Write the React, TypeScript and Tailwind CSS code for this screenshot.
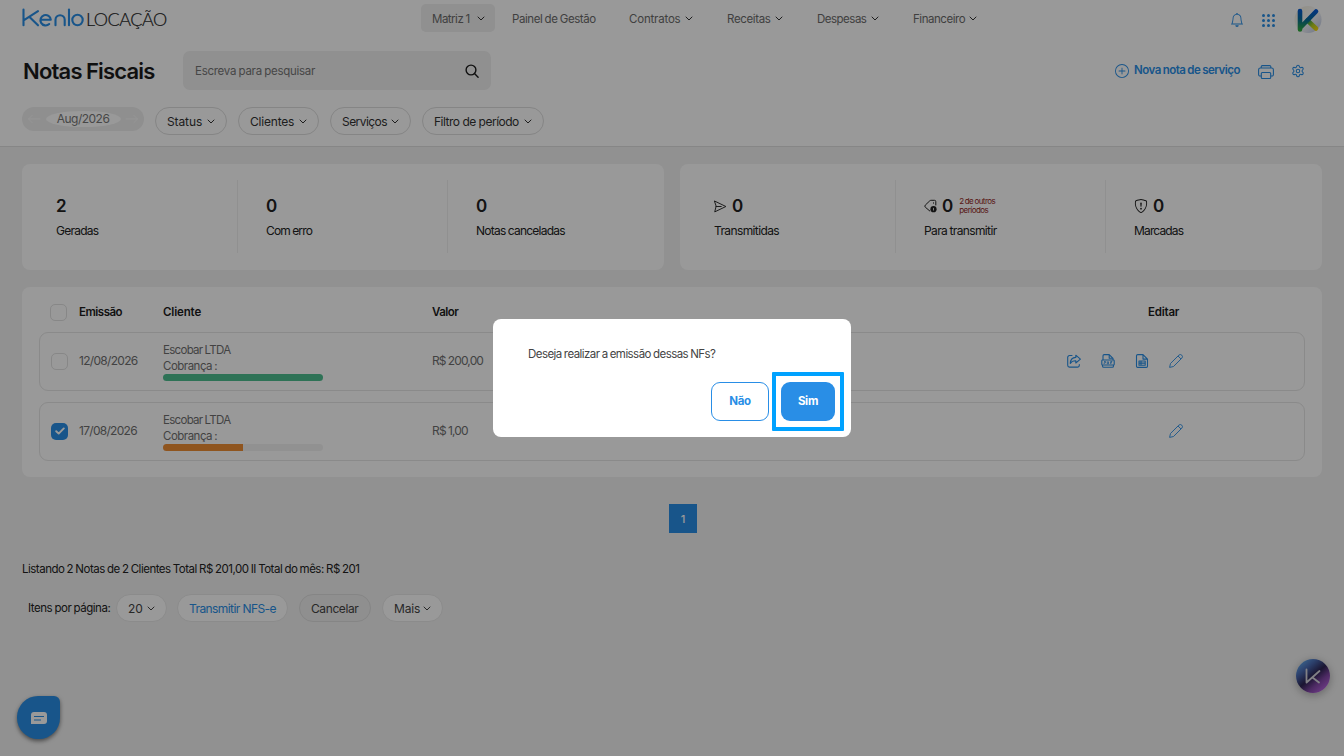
import React from "react";
import { BsBell, BsShieldExclamation, BsPlusCircle } from "react-icons/bs";
import { Settings } from "lucide-react";

function Chevron({ className = "" }: { className?: string }) {
  return (
    <svg viewBox="0 0 8 5" className={`h-[5px] w-[8px] shrink-0 ${className}`} fill="none" stroke="currentColor" strokeWidth="1" strokeLinecap="round" strokeLinejoin="round">
      <path d="M1 1l3 3 3-3" />
    </svg>
  );
}

function Logo() {
  return (
    <div className="flex h-[22px] w-[160px] items-start">
      <svg viewBox="0 0 62 20" className="h-[20px] w-[62px] shrink-0" fill="none" stroke="#298ee6" strokeWidth="2.1" strokeLinecap="round" strokeLinejoin="round">
        <path d="M1.500 1.500v15.800M16 3.200L2 12.200M7.500 9L16 17.300" />
        <path d="M18.500 11.800H28.800A5.200 5.200 0 1 0 27.200 16" />
        <path d="M33.500 17.300V11.800a4.600 4.600 0 0 1 9.200 0v5.500" />
        <path d="M47 1.500v15.800" />
        <circle cx="55.500" cy="12" r="5.200" />
      </svg>
      <span className="ml-[2px] mt-[1px] whitespace-nowrap font-[Lato] text-[18px] font-light leading-[20px] tracking-[-0.5px] text-[#222] [-webkit-text-stroke:0.2px_#333]">LOCAÇÃO</span>
    </div>
  );
}

function NavItem({ label, width, track, chevron = true }: { label: string; width: string; track: string; chevron?: boolean }) {
  return (
    <div className={`flex shrink-0 items-center ${width}`}>
      <span className={`whitespace-nowrap pt-px leading-[18px] ${track}`}>{label}</span>
      {chevron && <Chevron className="ml-auto text-[#333]" />}
    </div>
  );
}

function Pill({ label, className, track, chevron = true }: { label: string; className: string; track: string; chevron?: boolean }) {
  return (
    <button className={`flex h-7 shrink-0 items-center justify-between rounded-full border px-[11px] pt-px text-[12px] ${className}`}>
      <span className={`whitespace-nowrap ${track}`}>{label}</span>
      {chevron && <Chevron />}
    </button>
  );
}

function Stat({ value, label, track, icon, note, last }: { value: string; label: string; track: string; icon?: React.ReactNode; note?: React.ReactNode; last?: boolean }) {
  return (
    <div className={`flex h-[73px] shrink-0 flex-col pt-[16px] ${last ? "w-[182px]" : "mr-[28px] w-[182px] border-r border-[#f0f0f0]"}`}>
      <div className="flex h-5 items-center text-[#222]">
        {icon}
        <span className="text-[17px] font-semibold leading-5">{value}</span>
        {note}
      </div>
      <div className={`mt-[7px] text-[12px] leading-4 text-[#222] ${track}`}>{label}</div>
    </div>
  );
}

function SendIcon() {
  return (
    <svg viewBox="0 0 14 14" className="mr-[5px] size-[13px]" fill="none" stroke="currentColor" strokeWidth="1" strokeLinejoin="round" strokeLinecap="round">
      <path d="M.8 1.200L12.800 7 .8 12.800l1.400-5.800zM2.200 7h5.600" />
    </svg>
  );
}

function TagIcon() {
  return (
    <svg viewBox="0 0 14 14" className="mr-[4px] size-[14px]" fill="none" stroke="currentColor" strokeWidth="1" strokeLinejoin="round" strokeLinecap="round">
      <path d="M5.800 12L1.300 8.200a1.500 1.500 0 0 1 0-2.100L5.800 1.800a2 2 0 0 1 1.300-.5h3.400A1.300 1.300 0 0 1 11.800 2.600V6" />
      <path d="M9.500 3.800v.4" />
      <circle cx="9.500" cy="10.200" r="3.100" fill="currentColor" stroke="none" />
      <path d="M9.500 9.300v1.800" stroke="#fff" strokeWidth=".8" />
    </svg>
  );
}

function ShareIcon() {
  return (
    <svg viewBox="0 0 14 14" className="size-[14px]" fill="none" stroke="currentColor" strokeWidth="1.1" strokeLinejoin="round" strokeLinecap="round">
      <path d="M5 1.500H2.500A1.800 1.800 0 0 0 .7 3.300v8a1.800 1.800 0 0 0 1.800 1.800h8a1.800 1.800 0 0 0 1.800-1.800V10.500" />
      <path d="M8.800 1.200l4.600 3.900-4.600 3.900V6.800C6 6.700 4.500 7.600 3.300 9.500 3.400 6 5.500 3.600 8.800 3.400z" />
    </svg>
  );
}

function PdfIcon() {
  return (
    <svg viewBox="0 0 14 14" className="size-[14px]" fill="none" stroke="currentColor" strokeWidth="1.1" strokeLinejoin="round">
      <path d="M2 6V1.800A1.200 1.200 0 0 1 3.200.6h5L12 4.300V6M8.200.6v3.700H12" />
      <rect x=".8" y="6" width="12.400" height="5" rx=".8" />
      <path d="M3 7.500h1.500v1.200H3.200V10M6.300 7.300v2.500h1.200V7.500M9.700 10V7.500h1.600M9.700 8.700h1.300" strokeWidth=".8" />
      <path d="M1.500 11v1a1.300 1.300 0 0 0 1.300 1.300h8.400a1.300 1.300 0 0 0 1.300-1.300v-1" />
    </svg>
  );
}

function SheetIcon() {
  return (
    <svg viewBox="0 0 14 14" className="size-[14px]" fill="none" stroke="currentColor" strokeWidth="1.1" strokeLinejoin="round">
      <path d="M8 .6H2.700A1.200 1.200 0 0 0 1.500 1.800v10.400a1.200 1.200 0 0 0 1.200 1.200h8.600a1.200 1.200 0 0 0 1.200-1.200V5.100zM8 .6v4.500h4.500" />
      <path d="M4 7h6.200v4.200H4zM4 9.100h6.200M6 7v4.200" />
    </svg>
  );
}

function PencilIcon() {
  return (
    <svg viewBox="0 0 14 14" className="size-[14px]" fill="none" stroke="currentColor" strokeWidth=".9" strokeLinejoin="round">
      <path d="M.6 13.400l.9-3.900L9.800 1.200a1.900 1.900 0 0 1 3 3L4.500 12.500zM9 2l3 3" />
    </svg>
  );
}

function PrinterIcon() {
  return (
    <svg viewBox="0 0 16 14" className="h-[14px] w-[16px]" fill="none" stroke="currentColor" strokeWidth="1.1" strokeLinejoin="round">
      <path d="M3.200 3V1.800A1.200 1.200 0 0 1 4.400.6h7.200a1.200 1.200 0 0 1 1.200 1.200V3" />
      <path d="M3.300 11H2A1.400 1.400 0 0 1 .6 9.600V4.800A1.800 1.800 0 0 1 2.400 3h11.200a1.800 1.800 0 0 1 1.800 1.800v4.800A1.400 1.400 0 0 1 14 11h-1.300" />
      <rect x="3.300" y="7.500" width="9.400" height="6" rx="1" />
    </svg>
  );
}

function Avatar() {
  return (
    <svg viewBox="0 0 28 28" className="size-7">
      <defs>
        <linearGradient id="av" gradientUnits="userSpaceOnUse" x1="14" y1="4" x2="12" y2="25">
          <stop offset="0" stopColor="#0759d4" />
          <stop offset=".45" stopColor="#066a9a" />
          <stop offset="1" stopColor="#2faa3c" />
        </linearGradient>
        <linearGradient id="leg" gradientUnits="userSpaceOnUse" x1="14" y1="14" x2="24" y2="24">
          <stop offset="0" stopColor="#1d9a5a" />
          <stop offset=".5" stopColor="#b8cf20" />
          <stop offset="1" stopColor="#ffd90a" />
        </linearGradient>
        <linearGradient id="avb" x1="0" y1="0" x2="1" y2="1">
          <stop offset="0" stopColor="#f4edda" />
          <stop offset=".5" stopColor="#f8f8f8" />
          <stop offset="1" stopColor="#b7c4e2" />
        </linearGradient>
      </defs>
      <circle cx="14" cy="13.500" r="13.500" fill="url(#avb)" />
      <g fill="none" strokeWidth="4.600" strokeLinecap="round">
        <path d="M13.500 14.500l8.500 8" stroke="url(#leg)" />
        <path d="M6 5v18.500M22 5.500L6.500 21.500" stroke="url(#av)" />
      </g>
    </svg>
  );
}

function Check({ checked }: { checked?: boolean }) {
  return checked ? (
    <span className="flex size-[17px] items-center justify-center rounded-[5px] bg-[#298ee6]">
      <svg viewBox="0 0 10 8" className="h-2 w-2.5" fill="none" stroke="#fff" strokeWidth="1.900" strokeLinecap="round" strokeLinejoin="round">
        <path d="M1.200 4.200l2.500 2.400L8.800 1.400" />
      </svg>
    </span>
  ) : (
    <span className="block size-[17px] rounded-[5px] border border-[#e2e2e2]" />
  );
}

function Row({ date, value, valueTrack, bar, actions, checked }: { date: string; value: string; valueTrack: string; bar: React.ReactNode; actions?: boolean; checked?: boolean }) {
  return (
    <div className="flex h-[59px] items-center rounded-[9px] border border-[#e6e6e6] pb-px text-[12px] text-[#6f6f6f]">
      <div className="ml-[11px] w-[28px]"><Check checked={checked} /></div>
      <div className="w-[84px] tracking-[-0.7px]">{date}</div>
      <div className="w-[269px] pt-px">
        <div className="text-[11.5px] leading-4 tracking-[-0.7px]">Escobar LTDA</div>
        <div className="text-[11.5px] leading-4 tracking-[-0.5px]">Cobrança :</div>
        <div className="flex h-[7px] w-[160px] overflow-hidden rounded-full bg-[#f2f2f2]">{bar}</div>
      </div>
      <div className={`w-[400px] ${valueTrack}`}>{value}</div>
      <div className="ml-auto mr-[121px] flex items-center text-[#298ee6]">
        {actions && (
          <div className="mr-[20px] flex gap-[20px]">
            <ShareIcon />
            <PdfIcon />
            <SheetIcon />
          </div>
        )}
        <PencilIcon />
      </div>
    </div>
  );
}

export default function App() {
  return (
    <div className="relative h-[756px] w-[1344px] overflow-hidden bg-[#f2f2f2] font-[Inter,sans-serif] text-[#222] [word-spacing:-0.5px]">
      <header className="h-[147px] border-b border-[#dfdfdf] bg-white px-[22px]">
        <div className="flex h-[38px] items-start">
          <div className="pt-[8px]"><Logo /></div>
          <nav className="ml-[239px] flex h-[34px] items-center text-[11.5px] text-[#6b6b6b]">
            <div className="mt-[2px] flex h-[28px] w-[74px] items-center rounded-[5px] bg-[#f0f0f0] pl-[11px] pr-[10px]">
              <NavItem label="Matriz 1" width="w-full" track="tracking-[-0.5px]" />
            </div>
            <div className="ml-[17px] mt-[2px] flex gap-[34px]">
              <NavItem label="Painel de Gestão" width="w-[83px]" track="tracking-[-0.43px]" chevron={false} />
              <NavItem label="Contratos" width="w-[64px]" track="tracking-[-0.2px]" />
              <NavItem label="Receitas" width="w-[56px]" track="tracking-[-0.35px]" />
              <NavItem label="Despesas" width="w-[62px]" track="tracking-[-0.5px]" />
              <NavItem label="Financeiro" width="w-[64px]" track="tracking-[-0.45px]" />
            </div>
          </nav>
          <div className="ml-auto flex h-[40px] items-center text-[#298ee6]">
            <BsBell className="mr-[18px] size-[14px]" />
            <svg viewBox="0 0 13 13" className="mr-[19px] size-[13px]" fill="currentColor">
              {[1.5, 6.5, 11.5].map((y) => [1.5, 6.5, 11.5].map((x) => <circle key={`${x}-${y}`} cx={x} cy={y} r="1.500" />))}
            </svg>
            <Avatar />
          </div>
        </div>
        <div className="mt-[13px] flex h-[39px] items-center">
          <h1 className="w-[161px] whitespace-nowrap pl-px pt-px text-[22px] font-semibold tracking-[-0.8px] text-[#1c1c1c]">Notas Fiscais</h1>
          <div className="flex h-[39px] w-[308px] items-center justify-between rounded-[7px] bg-[#f0f0f0] px-[12px] text-[11.5px] text-[#757575]">
            <span className="pt-[2px] tracking-[-0.28px]">Escreva para pesquisar</span>
            <svg viewBox="0 0 14 14" className="size-[14px]" fill="none" stroke="#1c1c1c" strokeWidth="1.400" strokeLinecap="round">
              <circle cx="6" cy="6" r="4.900" />
              <path d="M9.500 9.500l3.600 3.700" />
            </svg>
          </div>
          <div className="ml-auto flex items-center text-[#298ee6]">
            <BsPlusCircle className="mr-[5px] size-[14px]" />
            <span className="w-[124px] whitespace-nowrap pt-px text-[11.5px] font-semibold tracking-[-0.5px]">Nova nota de serviço</span>
            <span className="mt-[3px]"><PrinterIcon /></span>
            <Settings className="ml-[17px] mr-[17px] size-[14px]" strokeWidth={1.8} />
          </div>
        </div>
        <div className="mt-[17px] flex items-start">
          <div className="flex h-6 w-[122px] items-center justify-between rounded-full bg-[#efefef] px-[5px] text-[12px] text-[#777]">
            <svg viewBox="0 0 14 10" className="h-[10px] w-[14px]" fill="none" stroke="#fafafa" strokeLinecap="round" strokeLinejoin="round"><path d="M13 5H1.500M5 1.500L1.500 5 5 8.500" /></svg>
            <span className="flex h-4 w-[75px] items-center justify-center rounded-[50%] bg-white tracking-[-0.5px]">Aug/2026</span>
            <svg viewBox="0 0 14 10" className="h-[10px] w-[14px]" fill="none" stroke="#fafafa" strokeLinecap="round" strokeLinejoin="round"><path d="M1 5h11.500M9 1.500L12.500 5 9 8.500" /></svg>
          </div>
          <div className="ml-[11px] flex gap-[11px] text-[#333]">
            <Pill label="Status" className="w-[72px] border-[#dedede]" track="tracking-[-0.1px]" />
            <Pill label="Clientes" className="w-[81px] border-[#dedede]" track="tracking-[-0.2px]" />
            <Pill label="Serviços" className="w-[81px] border-[#dedede]" track="tracking-[-0.55px]" />
            <Pill label="Filtro de período" className="w-[122px] border-[#dedede]" track="tracking-[-0.5px]" />
          </div>
        </div>
      </header>

      <main className="px-[22px] pt-[17px]">
        <div className="flex gap-4">
          <section className="flex h-[106px] w-[642px] rounded-[8px] bg-white pl-[34px] pt-[16px]">
            <Stat value="2" label="Geradas" track="tracking-[-0.75px]" />
            <Stat value="0" label="Com erro" track="tracking-[-0.8px]" />
            <Stat value="0" label="Notas canceladas" track="tracking-[-0.75px]" last />
          </section>
          <section className="flex h-[106px] w-[642px] rounded-[8px] bg-white pl-[34px] pt-[16px]">
            <Stat value="0" label="Transmitidas" track="tracking-[-0.62px]" icon={<SendIcon />} />
            <Stat
              value="0"
              label="Para transmitir"
              track="tracking-[-0.62px]"
              icon={<TagIcon />}
              note={<span className="ml-[6px] text-[8px] leading-[9px] tracking-[-0.55px] text-[#93291e]">2 de outros<br />períodos</span>}
            />
            <Stat value="0" label="Marcadas" track="tracking-[-0.85px]" last icon={<BsShieldExclamation className="mr-[5px] size-[14px]" />} />
          </section>
        </div>

        <section className="mt-[17px] h-[190px] rounded-[8px] bg-white px-[17px]">
          <div className="flex h-[45px] items-center pt-[5px] text-[11.5px] font-semibold text-[#1c1c1c]">
            <div className="ml-[11px] w-[29px]"><Check /></div>
            <div className="w-[84px] pt-[2px] tracking-[-0.5px]">Emissão</div>
            <div className="w-[269px] pt-[2px] tracking-[-0.15px]">Cliente</div>
            <div className="pt-[2px] tracking-[-0.5px]">Valor</div>
            <div className="ml-auto w-[157px] pt-[2px] tracking-[-0.2px]">Editar</div>
          </div>
          <Row date="12/08/2026" value="R$ 200,00" valueTrack="tracking-[-0.85px]" bar={<div className="w-full bg-[#4ebe8f]" />} actions />
          <div className="h-[11px]" />
          <Row date="17/08/2026" value="R$ 1,00" valueTrack="tracking-[-0.8px]" bar={<div className="w-1/2 bg-[#ee8e35]" />} checked />
        </section>

        <div className="mt-[27px] flex justify-center pl-[22px]">
          <div className="flex h-[29px] w-[28px] items-center justify-center bg-[#298ee6] pt-px text-[11px] font-medium text-white">1</div>
        </div>

        <p className="mt-[28px] whitespace-nowrap text-[11.5px] leading-4 tracking-[-0.5px]">Listando 2 Notas de 2 Clientes Total R$ 201,00 II Total do mês: R$ 201</p>
        <div className="mt-[17px] flex items-center pl-[6px] text-[#444]">
          <span className="w-[88px] whitespace-nowrap text-[11.5px] leading-[18px] tracking-[-0.47px] text-[#222]">Itens por página:</span>
          <Pill label="20" className="w-[51px] border-[#e8e8e8] bg-white" track="" />
          <Pill label="Transmitir NFS-e" className="ml-[10px] w-[111px] border-[#e8e8e8] bg-white text-[#298ee6]" track="tracking-[-0.58px]" chevron={false} />
          <Pill label="Cancelar" className="ml-[11px] w-[72px] border-[#dedede] bg-[#efefef]" track="tracking-[-0.4px]" chevron={false} />
          <Pill label="Mais" className="ml-[11px] w-[61px] border-[#e8e8e8] bg-white" track="tracking-[-0.2px]" />
        </div>
      </main>

      <button className="absolute left-[17px] top-[696px] flex size-[43px] items-center justify-center rounded-[21px_6px_21px_21px] bg-[#298ee6] shadow-[0_2px_4px_rgba(0,0,0,0.500)]">
        <svg viewBox="0 0 16 12" className="h-[12px] w-[16px]" fill="none">
          <path d="M3 0h10a3 3 0 0 1 3 3v6a3 3 0 0 1-3 3H0V3a3 3 0 0 1 3-3z" fill="#fff" />
          <path d="M3 4.500h10M3 8h7" stroke="#298ee6" strokeWidth="1.200" />
        </svg>
      </button>
      <button className="absolute left-[1296px] top-[659px] flex size-[34px] items-center justify-center rounded-full bg-[linear-gradient(140deg,#69b5f5_5%,#4a6cb5_28%,#2d2452_50%,#8046a5_68%,#c86df0_95%)] shadow-[0_2px_8px_rgba(0,0,0,0.300)]">
        <svg viewBox="0 0 16 16" className="size-4" fill="none" stroke="#d8d8e0" strokeWidth="1.800" strokeLinecap="round" strokeLinejoin="round"><path d="M1.500 1.500v13L14.500 3M7.500 9.500l6.500 5" /></svg>
      </button>

      <div className="absolute inset-0 bg-black/40" />
      <div role="dialog" className="absolute left-[493px] top-[319px] h-[118px] w-[358px] rounded-[8px] bg-white">
        <p className="pl-[35px] pt-[27px] text-[11.5px] leading-4 tracking-[-0.56px] text-[#444]">Deseja realizar a emissão dessas NFs?</p>
        <div className="mt-[10px] flex items-center justify-end pr-[7px] text-[11.5px] font-bold">
          <button className="mr-[3px] h-[39px] w-[58px] rounded-[9px] border-[1.5px] border-[#298ee6] pt-px tracking-[-0.3px] text-[#298ee6]">Não</button>
          <div className="flex h-[59px] w-[72px] items-center justify-center rounded-[1px] border-4 border-[#00a2ff]">
            <button className="h-[39px] w-[54px] rounded-[9px] bg-[#298ee6] pt-px tracking-[-0.3px] text-white">Sim</button>
          </div>
        </div>
      </div>
    </div>
  );
}
